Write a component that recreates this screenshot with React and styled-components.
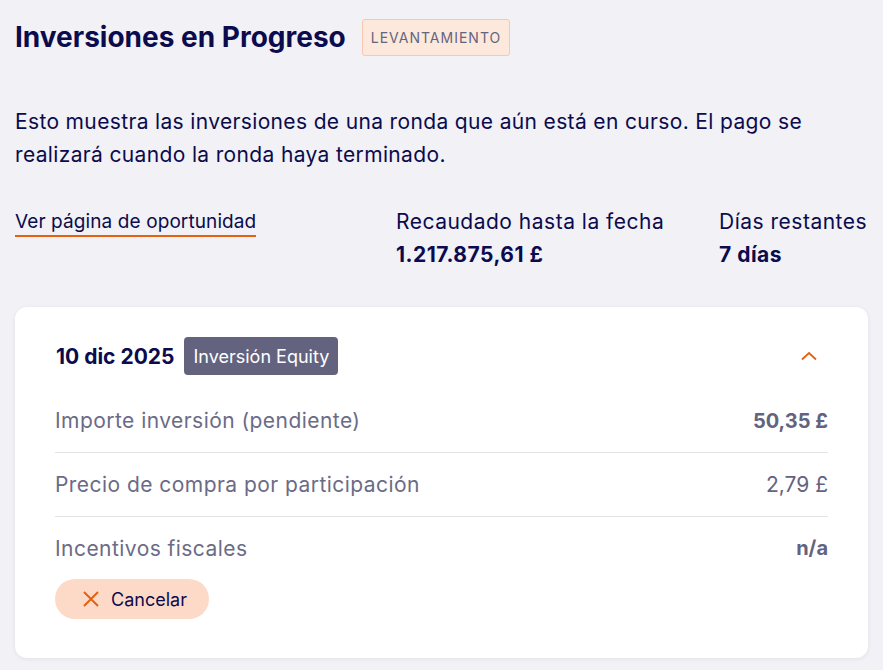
import React from "react";
import styled, { createGlobalStyle } from "styled-components";

const Global = createGlobalStyle`
  html, body { margin: 0; padding: 0; background: #f1f1f6; }
  body { font-family: "Inter", "Liberation Sans", sans-serif; color: #0b0b4d; }
  * { box-sizing: border-box; }
`;

const Page = styled.div`
  padding: 18px 15px 12px 15px;
  width: 883px;
`;

const Header = styled.div`
  display: flex;
  align-items: center;
  gap: 16px;
  height: 38px;
`;

const Title = styled.h1`
  margin: 0;
  font-size: 28px;
  font-weight: 700;
  letter-spacing: 0;
  color: #0b0b4d;
`;

const StatusBadge = styled.span`
  display: inline-flex;
  align-items: center;
  height: 37px;
  padding: 0 8px;
  background: #fde8dc;
  border: 1px solid #f8c9ae;
  border-radius: 3px;
  font-size: 14px;
  letter-spacing: 1px;
  color: #64647e;
`;

const Intro = styled.p`
  margin: 49px 0 0 0;
  font-size: 21px;
  letter-spacing: 0.35px;
  line-height: 33px;
  color: #0b0b4d;
  max-width: 830px;
`;

const StatsRow = styled.div`
  display: flex;
  align-items: flex-start;
  margin-top: 39px;
`;

const LinkCol = styled.div`
  flex: 0 0 381px;
`;

const OppLink = styled.a`
  font-size: 19px;
  letter-spacing: 0.1px;
  color: #0b0b4d;
  text-decoration: none;
  border-bottom: 2px solid #e5600f;
  padding-bottom: 2px;
  line-height: 24px;
`;

const Stat = styled.div`
  display: flex;
  flex-direction: column;
  gap: 9px;
  flex: ${(p) => (p.$w ? `0 0 ${p.$w}px` : "1 1 auto")};
`;

const StatLabel = styled.span`
  font-size: 21px;
  letter-spacing: 0.5px;
  line-height: 24px;
  white-space: nowrap;
`;

const StatValue = styled.span`
  font-size: 21px;
  letter-spacing: 0.5px;
  line-height: 24px;
  font-weight: 700;
`;

const Card = styled.div`
  margin-top: 40px;
  background: #fff;
  border-radius: 12px;
  box-shadow: 0 1px 4px rgba(40, 40, 80, 0.08);
  padding: 30px 40px 39px 40px;
  width: 853px;
`;

const CardHead = styled.div`
  display: flex;
  align-items: center;
  gap: 10px;
  height: 38px;
`;

const DateText = styled.span`
  font-size: 21px;
  font-weight: 700;
  color: #0b0b4d;
  margin-left: 1px;
`;

const TypeBadge = styled.span`
  display: inline-flex;
  align-items: center;
  height: 38px;
  padding: 0 9px;
  background: #63637f;
  color: #fff;
  border-radius: 4px;
  font-size: 18px;
`;

const Toggle = styled.button`
  margin-left: auto;
  margin-right: 10px;
  background: none;
  border: 0;
  padding: 0;
  display: flex;
  cursor: pointer;
`;

const Rows = styled.div`
  margin-top: 14px;
`;

const Row = styled.div`
  display: flex;
  justify-content: space-between;
  align-items: center;
  height: ${(p) => (p.$last ? 62 : 64)}px;
  padding-top: ${(p) => (p.$last ? 0 : 0)}px;
  border-bottom: ${(p) => (p.$last ? "none" : "1px solid #e3e3e8")};
`;

const RowLabel = styled.span`
  font-size: 21px;
  letter-spacing: 0.45px;
  color: #6b6b86;
`;

const RowValue = styled.span`
  font-size: ${(p) => (p.$bold ? 20 : 21)}px;
  color: #63637f;
  font-weight: ${(p) => (p.$bold ? 700 : 400)};
`;

const CancelBtn = styled.button`
  display: inline-flex;
  align-items: center;
  gap: 10px;
  height: 40px;
  padding: 0 22px 0 26px;
  background: #fddac8;
  border: 0;
  border-radius: 20px;
  font-family: inherit;
  font-size: 18px;
  color: #0b0b4d;
  cursor: pointer;
`;

export default function App() {
  return (
    <>
      <Global />
      <Page>
        <Header>
          <Title>Inversiones en Progreso</Title>
          <StatusBadge>LEVANTAMIENTO</StatusBadge>
        </Header>
        <Intro>
          Esto muestra las inversiones de una ronda que aún está en curso. El pago se
          realizará cuando la ronda haya terminado.
        </Intro>
        <StatsRow>
          <LinkCol>
            <OppLink href="#">Ver página de oportunidad</OppLink>
          </LinkCol>
          <Stat $w={323}>
            <StatLabel>Recaudado hasta la fecha</StatLabel>
            <StatValue>1.217.875,61 £</StatValue>
          </Stat>
          <Stat>
            <StatLabel>Días restantes</StatLabel>
            <StatValue>7 días</StatValue>
          </Stat>
        </StatsRow>
        <Card>
          <CardHead>
            <DateText>10 dic 2025</DateText>
            <TypeBadge>Inversión Equity</TypeBadge>
            <Toggle aria-label="Contraer">
              <svg width="18" height="10" viewBox="0 0 18 10" fill="none">
                <path d="M2 8.5 L9 2 L16 8.5" stroke="#e5600f" strokeWidth="1.8" />
              </svg>
            </Toggle>
          </CardHead>
          <Rows>
            <Row>
              <RowLabel>Importe inversión (pendiente)</RowLabel>
              <RowValue $bold>50,35 £</RowValue>
            </Row>
            <Row>
              <RowLabel>Precio de compra por participación</RowLabel>
              <RowValue>2,79 £</RowValue>
            </Row>
            <Row $last>
              <RowLabel>Incentivos fiscales</RowLabel>
              <RowValue $bold>n/a</RowValue>
            </Row>
          </Rows>
          <CancelBtn>
            <svg width="20" height="20" viewBox="0 0 20 20" fill="none">
              <path d="M3 3 L17 17 M17 3 L3 17" stroke="#e5600f" strokeWidth="2" />
            </svg>
            Cancelar
          </CancelBtn>
        </Card>
      </Page>
    </>
  );
}
